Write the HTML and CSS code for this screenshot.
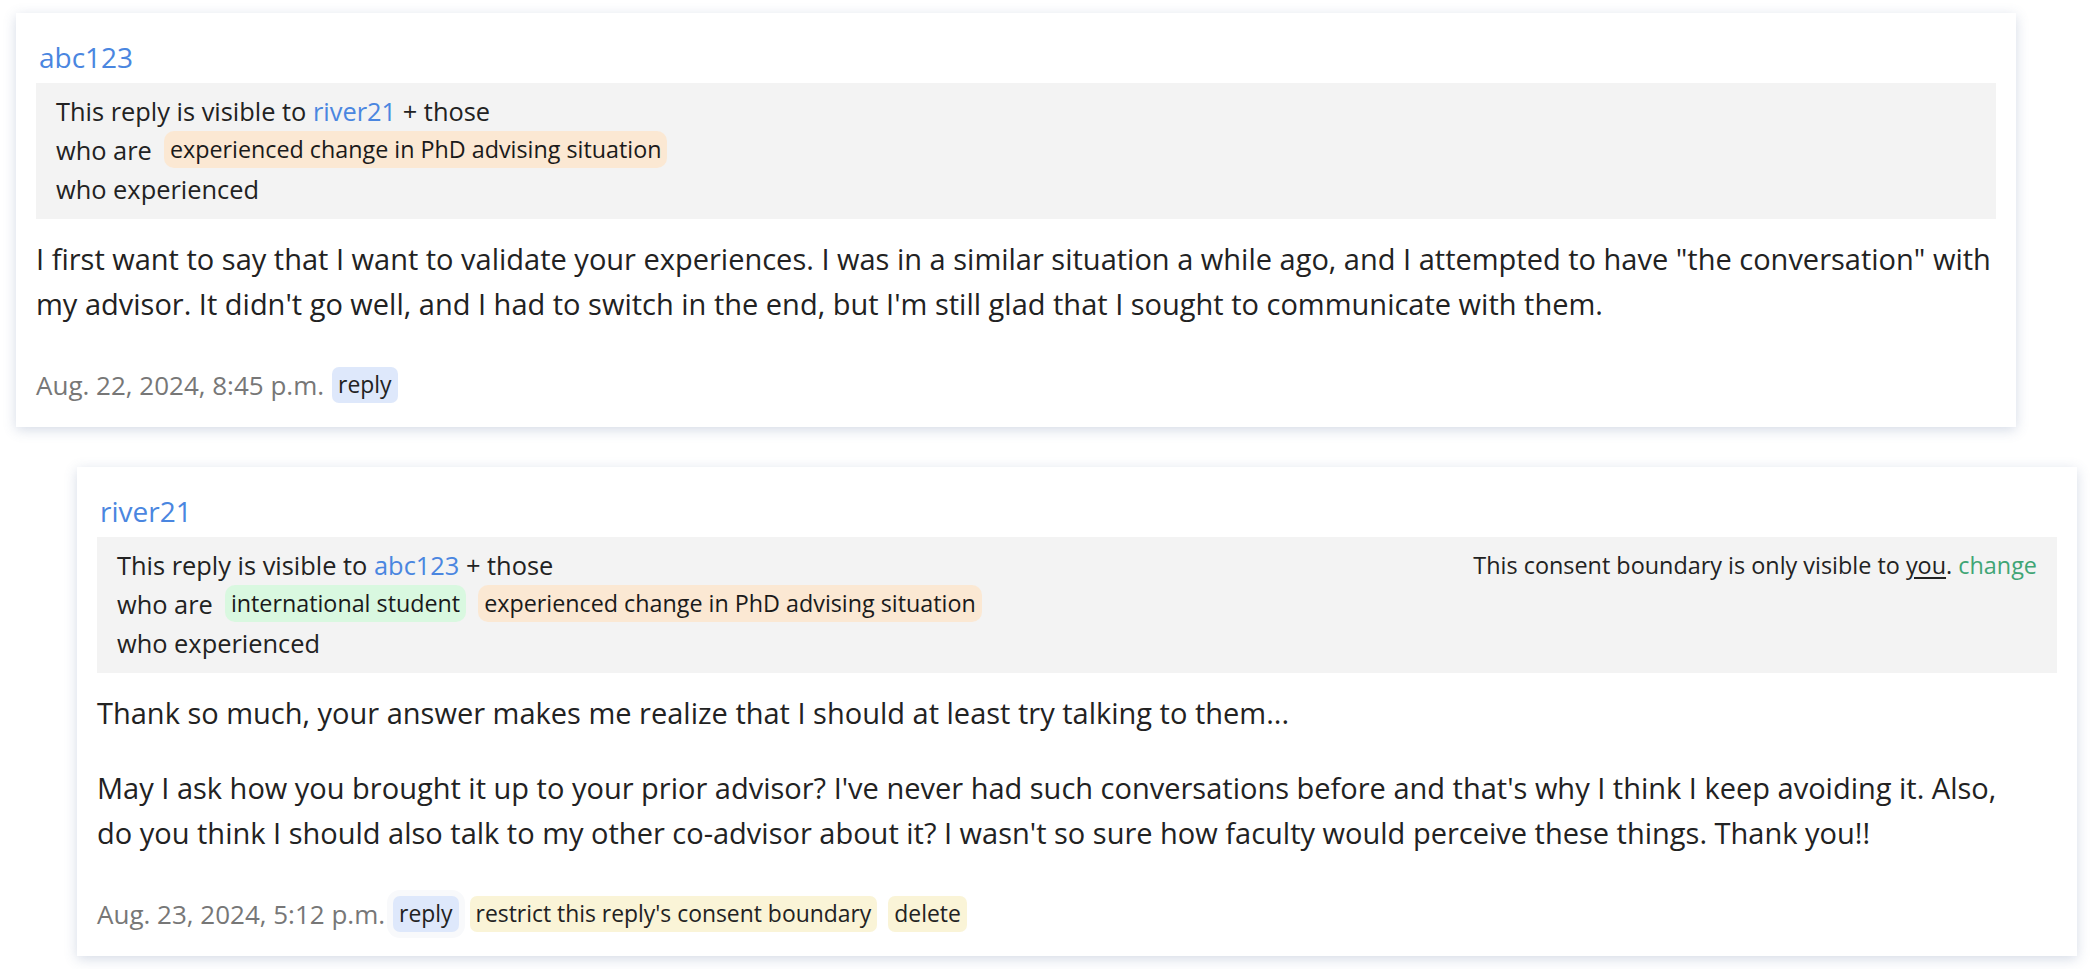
FILE: index.html
```
<!DOCTYPE html>
<html lang="en">
<head>
    <meta charset="UTF-8">
    <meta name="viewport" content="width=device-width, initial-scale=1.0">
    <title>Replies</title>
    <link rel="stylesheet" href="styles.css">
</head>
<body>
    <div class="thread">
        <article class="comment">
            <a class="author" href="#">abc123</a>
            <div class="boundary">
                <div class="boundary-row">
                    <span>This reply is visible to <a class="user" href="#">river21</a> + those</span>
                </div>
                <div class="boundary-row">
                    <span>who are</span>
                    <span class="tag tag-orange">experienced change in PhD advising situation</span>
                </div>
                <div class="boundary-row">
                    <span>who experienced</span>
                </div>
            </div>
            <div class="body">
                <p>I first want to say that I want to validate your experiences. I was in a similar situation a while ago, and I attempted to have "the conversation" with my advisor. It didn't go well, and I had to switch in the end, but I'm still glad that I sought to communicate with them.</p>
            </div>
            <div class="meta">
                <span class="date">Aug. 22, 2024, 8:45 p.m.</span>
                <a class="btn btn-reply" href="#">reply</a>
            </div>
        </article>

        <article class="comment reply">
            <a class="author" href="#">river21</a>
            <div class="boundary">
                <div class="boundary-row">
                    <span>This reply is visible to <a class="user" href="#">abc123</a> + those</span>
                    <span class="note">This consent boundary is only visible to <u>you</u>. <a class="change" href="#">change</a></span>
                </div>
                <div class="boundary-row">
                    <span>who are</span>
                    <span class="tag tag-green">international student</span>
                    <span class="tag tag-orange">experienced change in PhD advising situation</span>
                </div>
                <div class="boundary-row">
                    <span>who experienced</span>
                </div>
            </div>
            <div class="body">
                <p>Thank so much, your answer makes me realize that I should at least try talking to them...</p>
                <p>May I ask how you brought it up to your prior advisor? I've never had such conversations before and that's why I think I keep avoiding it. Also, do you think I should also talk to my other co-advisor about it? I wasn't so sure how faculty would perceive these things. Thank you!!</p>
            </div>
            <div class="meta">
                <span class="date">Aug. 23, 2024, 5:12 p.m.</span>
                <a class="btn btn-reply btn-focus" href="#">reply</a>
                <a class="btn btn-yellow" href="#">restrict this reply's consent boundary</a>
                <a class="btn btn-yellow" href="#">delete</a>
            </div>
        </article>
    </div>
</body>
</html>
```
FILE: styles.css
```
body {
    margin: 0;
    background: #fff;
    color: #222;
    font-family: "Open Sans", "Noto Sans", sans-serif;
}
a {
    text-decoration: none;
}
.thread {
    padding: 13px 16px;
    display: flex;
    flex-direction: column;
    gap: 40px;
}
.comment {
    width: 2000px;
    box-sizing: border-box;
    padding: 24px 20px;
    background: #fff;
    box-shadow: 0 3px 12px rgba(80, 105, 150, 0.24);
}
.reply {
    margin-left: 61px;
}
.author {
    display: block;
    padding-left: 3px;
    font-size: 28px;
    line-height: 40px;
    color: #4a86e0;
}
.boundary {
    margin-top: 6px;
    padding: 8px 20px 11px;
    background: #f3f3f3;
    font-size: 25.4px;
}
.boundary-row {
    display: flex;
    align-items: center;
    gap: 12px;
    height: 39px;
}
.boundary-row:first-child {
    justify-content: space-between;
}
.boundary-row .tag:first-of-type {
    margin-left: -4px;
}
.user {
    color: #4a86e0;
}
.note {
    font-size: 23.4px;
}
.note u {
    text-underline-offset: 3px;
}
.change {
    color: #3fa575;
}
.tag {
    display: inline-block;
    padding: 0 6px;
    font-size: 23.3px;
    line-height: 37px;
    border-radius: 10px;
    color: #1a1a1a;
}
.tag-orange {
    background: #fbe8d3;
}
.tag-green {
    background: #d9f8e0;
}
.body {
    margin-top: 17px;
    font-size: 29px;
    line-height: 45px;
}
.reply .body {
    padding-right: 24px;
}
.body p {
    margin: 0;
}
.body p + p {
    margin-top: 30px;
}
.meta {
    margin-top: 41px;
    display: flex;
    align-items: center;
    gap: 11px;
}
.date {
    margin-right: -3px;
    font-size: 26px;
    color: #777;
}
.btn {
    padding: 0 6px;
    font-size: 22.9px;
    line-height: 36px;
    border-radius: 7px;
    color: #222;
    box-shadow: 0 0 0 1px rgba(255, 255, 255, 0.6);
}
.btn-reply {
    background: #dee8fb;
}
.btn-focus {
    box-shadow: 0 0 0 6px #f8f9fb;
}
.btn-yellow {
    background: #faf4d7;
}
```
